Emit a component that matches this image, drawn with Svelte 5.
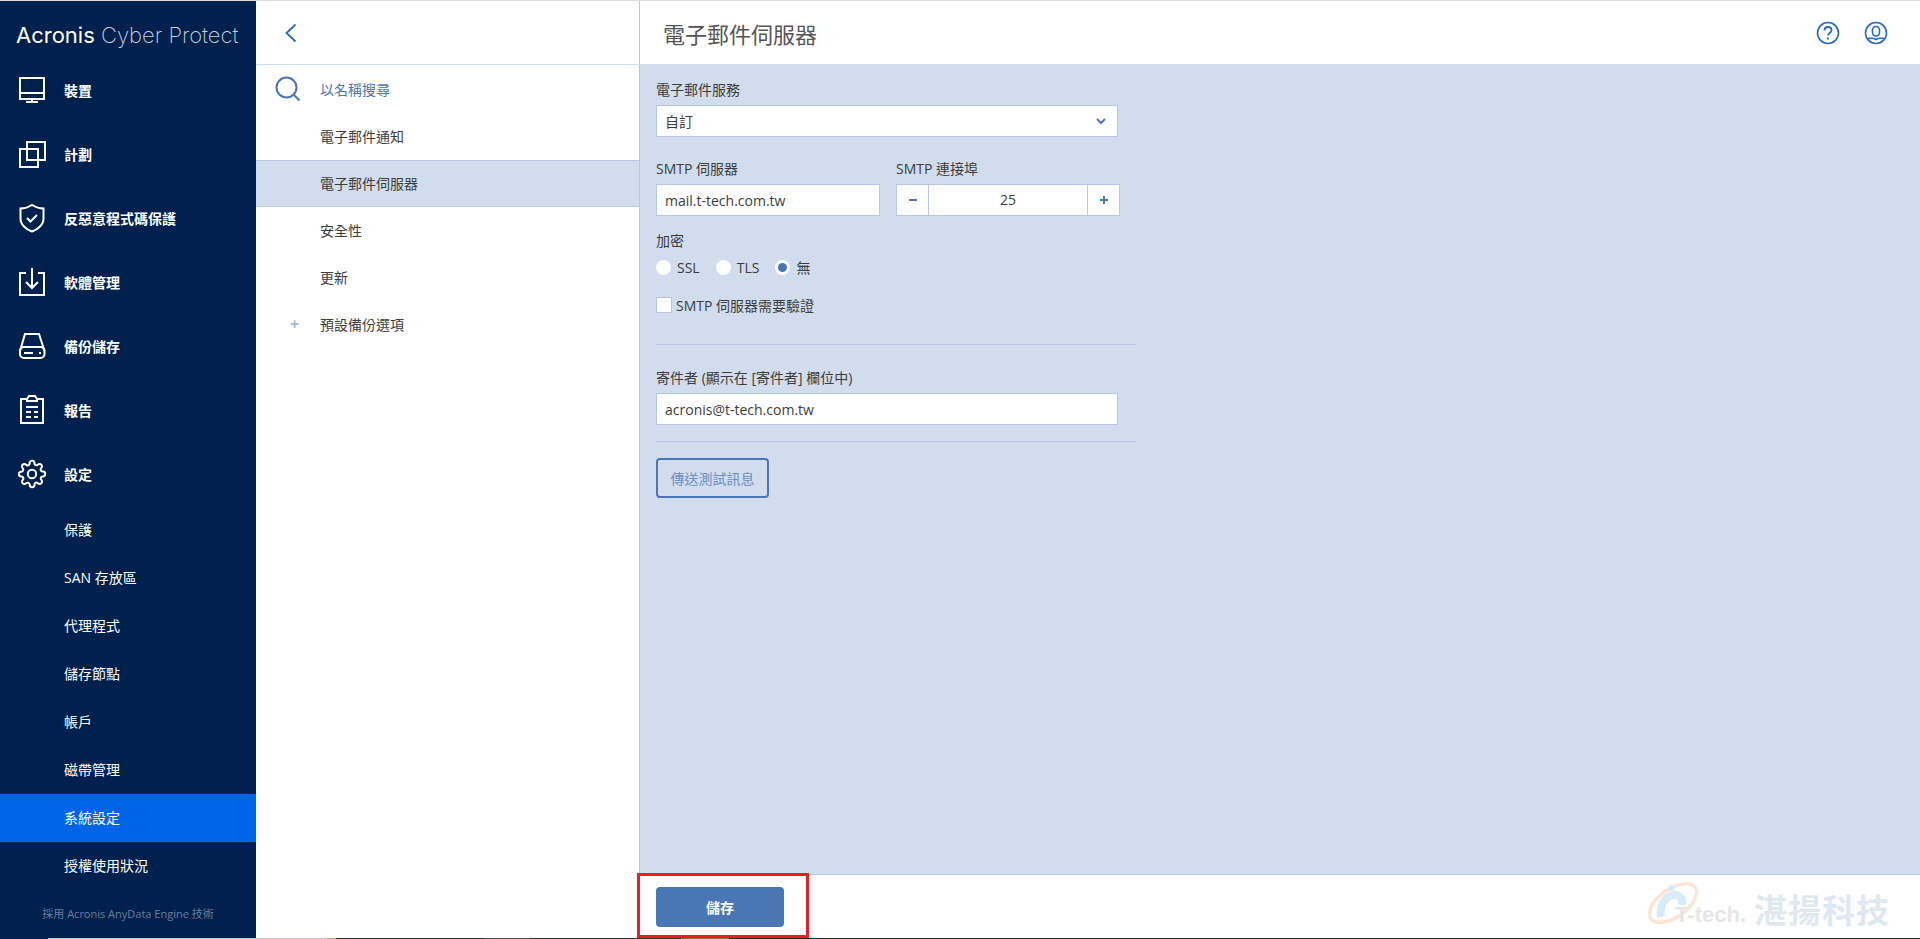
<script lang="ts">
	const mainNav = [
		{ id: 'devices', label: '裝置' },
		{ id: 'plans', label: '計劃' },
		{ id: 'shield', label: '反惡意程式碼保護' },
		{ id: 'software', label: '軟體管理' },
		{ id: 'storage', label: '備份儲存' },
		{ id: 'reports', label: '報告' },
		{ id: 'settings', label: '設定' }
	];

	const subNav = ['保護', 'SAN 存放區', '代理程式', '儲存節點', '帳戶', '磁帶管理', '系統設定', '授權使用狀況'];
	const activeSub = '系統設定';

	const settingsItems = [
		{ label: '電子郵件通知' },
		{ label: '電子郵件伺服器', active: true },
		{ label: '安全性' },
		{ label: '更新' },
		{ label: '預設備份選項', expandable: true }
	];

	const encryption = ['SSL', 'TLS', '無'];
	let selectedEncryption = $state('無');
	let port = $state(25);
</script>

<div class="shell">
	<aside class="sidebar">
		<div class="logo"><b>Acronis</b> <span>Cyber Protect</span></div>
		<nav>
			{#each mainNav as item (item.id)}
				<div class="navItem">
					<svg class="navIcon" width="32" height="32" viewBox="0 0 32 32" fill="none" stroke="#fff" stroke-width="2">
						{#if item.id === 'devices'}
							<rect x="4" y="4" width="24" height="21" />
							<path d="M4 19h24M16 25v3M10 28h12" />
						{:else if item.id === 'plans'}
							<rect x="4" y="11" width="18" height="18" />
							<rect x="11" y="4" width="18" height="18" />
						{:else if item.id === 'shield'}
							<path d="M16 3c4 2.500 8 3.500 11.500 3.500V17c0 6-6 10.500-11.500 12.500C10.500 27.500 4.500 23 4.500 17V6.500C8 6.500 12 5.500 16 3z" />
							<path d="M11 16l3.500 3.500 6.500-6.500" />
						{:else if item.id === 'software'}
							<path d="M10 7H4v22h24V7h-6M16 2v20M10 16l6 6 6-6" />
						{:else if item.id === 'storage'}
							<rect x="4" y="17" width="24.500" height="11" rx="4" />
							<path d="M4 21L9 4h14l5.500 17M8 23h9M23 23h2" />
						{:else if item.id === 'reports'}
							<path d="M11 5H5v24h22V5h-6" />
							<path d="M11 7V5l2-3h6l2 3v2zM10 13h12M10 18h5M18 18h4M10 23h5M18 23h4" />
						{:else}
							<g transform="translate(1.600 1.600) scale(1.200)" stroke-width="1.700">
								<circle cx="12" cy="12" r="3.500" />
								<path d="M19.400 15a1.650 1.650 0 0 0 .33 1.820l.06.06a2 2 0 0 1 0 2.830 2 2 0 0 1-2.830 0l-.06-.06a1.650 1.650 0 0 0-1.820-.33 1.650 1.650 0 0 0-1 1.510V21a2 2 0 0 1-2 2 2 2 0 0 1-2-2v-.09A1.650 1.650 0 0 0 9 19.400a1.650 1.650 0 0 0-1.820.33l-.06.06a2 2 0 0 1-2.830 0 2 2 0 0 1 0-2.830l.06-.06a1.650 1.650 0 0 0 .33-1.820 1.650 1.650 0 0 0-1.510-1H3a2 2 0 0 1-2-2 2 2 0 0 1 2-2h.09A1.650 1.650 0 0 0 4.600 9a1.650 1.650 0 0 0-.33-1.820l-.06-.06a2 2 0 0 1 0-2.830 2 2 0 0 1 2.830 0l.06.06a1.650 1.650 0 0 0 1.820.33H9a1.650 1.650 0 0 0 1-1.510V3a2 2 0 0 1 2-2 2 2 0 0 1 2 2v.09a1.650 1.650 0 0 0 1 1.510 1.650 1.650 0 0 0 1.820-.33l.06-.06a2 2 0 0 1 2.830 0 2 2 0 0 1 0 2.830l-.06.06a1.650 1.650 0 0 0-.33 1.820V9a1.650 1.650 0 0 0 1.510 1H21a2 2 0 0 1 2 2 2 2 0 0 1-2 2h-.09a1.650 1.650 0 0 0-1.510 1z" />
							</g>
						{/if}
					</svg>
					<span>{item.label}</span>
				</div>
			{/each}
			<div class="subNav">
				{#each subNav as label (label)}
					<div class="subItem" class:subActive={label === activeSub}>{label}</div>
				{/each}
			</div>
		</nav>
		<div class="poweredBy">採用 Acronis AnyData Engine 技術</div>
	</aside>

	<section class="settingsColumn">
		<div class="backBar">
			<svg width="12" height="20" viewBox="0 0 12 20" fill="none" stroke="#2668c5" stroke-width="1.800"><path d="M10.500 1.500L1.500 10l9 8.500" /></svg>
		</div>
		<div class="searchRow">
			<svg width="26" height="26" viewBox="0 0 26 26" fill="none" stroke="#4a76b5" stroke-width="2"><circle cx="11.500" cy="11.500" r="10" /><path d="M18.500 18.500l6 6" /></svg>
			<span>以名稱搜尋</span>
		</div>
		{#each settingsItems as item (item.label)}
			<div class="settingsRow" class:rowActive={item.active}>
				{#if item.expandable}<span class="plus">+</span>{/if}
				{item.label}
			</div>
		{/each}
	</section>

	<main class="detail">
		<header class="detailHeader">
			<h1>電子郵件伺服器</h1>
			<div class="headerIcons">
				<svg width="24" height="24" viewBox="0 0 24 24" fill="none" stroke="#2668c5" stroke-width="1.600">
					<circle cx="12" cy="12" r="10.500" />
					<path d="M8.500 9.500c0-2 1.500-3.500 3.500-3.500s3.500 1.400 3.500 3.300c0 2.700-3.500 2.700-3.500 5.200" stroke-width="1.800" />
					<path d="M12 16.500v2" stroke-width="1.800" />
				</svg>
				<svg width="24" height="24" viewBox="0 0 24 24" fill="none" stroke="#2668c5" stroke-width="1.600">
					<circle cx="12" cy="12" r="10.500" />
					<rect x="8.500" y="5.500" width="7" height="9.500" rx="3.500" />
					<path d="M3.500 17.500c3 0 5-1 8.500 1 3.500-2 5.500-1 8.500-1" />
				</svg>
			</div>
		</header>

		<div class="form">
			<label class="field">
				<span class="fieldLabel">電子郵件服務</span>
				<div class="select wide">
					<span>自訂</span>
					<svg width="10" height="7" viewBox="0 0 10 7" fill="none" stroke="#4a76b5" stroke-width="2"><path d="M1 1l4 4 4-4" /></svg>
				</div>
			</label>

			<div class="fieldPair">
				<label class="field">
					<span class="fieldLabel">SMTP 伺服器</span>
					<div class="input server">mail.t-tech.com.tw</div>
				</label>
				<div class="field">
					<span class="fieldLabel">SMTP 連接埠</span>
					<div class="stepper">
						<button onclick={() => port--}><span class="minus"></span></button>
						<div class="stepperValue">{port}</div>
						<button onclick={() => port++}><span class="plusSign"></span></button>
					</div>
				</div>
			</div>

			<div class="fieldLabel encryptionLabel">加密</div>
			<div class="radios">
				{#each encryption as option (option)}
					<button class="radio" onclick={() => (selectedEncryption = option)}>
						<span class="radioDot" class:radioOn={selectedEncryption === option}></span>
						{option}
					</button>
				{/each}
			</div>

			<div class="checkRow">
				<span class="checkbox"></span>
				SMTP 伺服器需要驗證
			</div>

			<hr class="firstRule" />

			<label class="field">
				<span class="fieldLabel">寄件者 (顯示在 [寄件者] 欄位中)</span>
				<div class="input wide">acronis@t-tech.com.tw</div>
			</label>

			<hr class="secondRule" />

			<button class="testButton">傳送測試訊息</button>
		</div>

		<footer class="detailFooter">
			<button class="saveButton">儲存</button>
			<div class="redBox"></div>
			<div class="watermark">
				<svg width="56" height="48" viewBox="0 0 56 48" fill="none">
					<ellipse cx="28" cy="24" rx="27" ry="14" transform="rotate(-35 28 24)" stroke="#fbe6d6" stroke-width="3.500" />
					<path d="M16 38c-2-12 5-22 14-22 6 0 8 5 7 10" stroke="#d8ecf7" stroke-width="8" />
					<circle cx="27" cy="9" r="3.500" fill="#d8ecf7" />
				</svg>
				<span class="wmTech">T-tech.</span>
				<span class="wmName">湛揚科技</span>
			</div>
		</footer>
	</main>
</div>
<div class="screenEdge"></div>

<style>
	:global(body) {
		margin: 0;
		background: #fff;
		overflow: hidden;
	}

	.shell {
		display: grid;
		grid-template-columns: 256px 384px 1fr;
		grid-template-rows: 937px;
		height: 937px;
		border-top: 1px solid #dcdcdc;
		font-family: 'Open Sans', 'Noto Sans CJK TC', sans-serif;
		font-size: 14px;
		color: #3c3c3c;
	}

	/* one row of a taskbar peeks out at the bottom of the capture */
	.screenEdge {
		height: 1px;
		background: linear-gradient(
			90deg,
			#00204d 0 48px,
			#b9c4d6 48px 256px,
			#c8c8c0 256px 327px,
			#b5ad6a 327px 336px,
			#2a3034 336px 485px,
			#555 485px 530px,
			#2a3034 530px 681px,
			#b0622a 681px 729px,
			#20282e 729px
		);
	}

	.sidebar {
		background: #00204d;
		color: #fff;
		display: flex;
		flex-direction: column;
	}

	.logo {
		height: 57px;
		padding: 18px 0 0 16px;
		box-sizing: border-box;
		font-family: Inter, 'Liberation Sans', sans-serif;
		font-size: 22px;
		line-height: 32px;
		white-space: nowrap;
	}

	.logo b {
		font-weight: 400;
	}

	.logo span {
		font-weight: 200;
		color: #c9d0da;
	}

	.navItem {
		height: 64px;
		display: flex;
		align-items: center;
		padding-left: 16px;
		font-weight: 700;
		gap: 16px;
	}

	.subItem {
		height: 48px;
		line-height: 48px;
		padding-left: 64px;
	}

	.subActive {
		background: #0064e6;
	}

	.poweredBy {
		margin-top: auto;
		height: 48px;
		line-height: 48px;
		text-align: center;
		font-size: 11px;
		color: #6b7f9c;
	}

	.settingsColumn {
		background: #fff;
		border-right: 1px solid #b7c9e2;
		display: flex;
		flex-direction: column;
	}

	.backBar {
		height: 63px;
		border-bottom: 1px solid #d1dcec;
		display: flex;
		align-items: center;
		padding-left: 29px;
		margin-right: -1px;
		flex: none;
	}

	.searchRow {
		height: 47px;
		padding: 0 0 1px 19px;
		display: flex;
		align-items: center;
		gap: 19px;
		color: #4a76b5;
		flex: none;
	}

	.settingsRow {
		height: 47px;
		line-height: 47px;
		padding-left: 64px;
		position: relative;
		flex: none;
	}

	.rowActive {
		background: #d1dcec;
		box-shadow: inset 0 1px 0 #b7c9e2, inset 0 -1px 0 #b7c9e2;
	}

	.plus {
		position: absolute;
		left: 34px;
		font-size: 16px;
		font-weight: 700;
		color: #a3b9d9;
	}

	.detail {
		background: #d1dcec;
		display: flex;
		flex-direction: column;
		min-width: 0;
	}

	.detailHeader {
		height: 63px;
		flex: none;
		background: #fff;
		display: flex;
		align-items: center;
		justify-content: space-between;
		padding: 0 32px 0 23px;
	}

	.detailHeader h1 {
		margin: 0;
		font-size: 22px;
		font-weight: 400;
		color: #555;
	}

	.headerIcons {
		display: flex;
		gap: 24px;
	}

	.form {
		flex: 1;
		padding: 15px 0 0 16px;
		width: 480px;
	}

	.field {
		display: block;
	}

	.fieldLabel {
		display: block;
		height: 21px;
		line-height: 21px;
		color: #3c3c3c;
	}

	.select,
	.input {
		height: 32px;
		box-sizing: border-box;
		background: #fff;
		border: 1px solid #b7c9e2;
		display: flex;
		align-items: center;
		justify-content: space-between;
		padding: 0 8px;
		margin-top: 5px;
	}

	.select {
		padding-right: 11px;
	}

	.wide {
		width: 462px;
	}

	.server {
		width: 224px;
	}

	.fieldPair {
		display: flex;
		gap: 16px;
		margin-top: 21px;
	}

	.stepper {
		display: flex;
		width: 224px;
		height: 32px;
		box-sizing: border-box;
		margin-top: 5px;
		background: #fff;
		border: 1px solid #b7c9e2;
	}

	.stepper button {
		width: 31px;
		border: 0;
		padding: 0;
		background: none;
		display: flex;
		align-items: center;
		justify-content: center;
	}

	.minus,
	.plusSign {
		display: block;
		width: 8px;
		height: 2px;
		background: #4a76b5;
		position: relative;
	}

	.plusSign::after {
		content: '';
		position: absolute;
		left: 3px;
		top: -3px;
		width: 2px;
		height: 8px;
		background: #4a76b5;
	}

	.stepperValue {
		flex: 1;
		line-height: 30px;
		text-align: center;
		border-left: 1px solid #b7c9e2;
		border-right: 1px solid #b7c9e2;
	}

	.encryptionLabel {
		margin-top: 14px;
	}

	.radios {
		display: flex;
		gap: 16px;
		margin-top: 5px;
	}

	.radio {
		display: flex;
		align-items: center;
		gap: 6px;
		height: 22px;
		padding: 0;
		border: 0;
		background: none;
		font: inherit;
		color: #3c3c3c;
	}

	.radioDot {
		width: 15px;
		height: 15px;
		border-radius: 50%;
		background: #fff;
		display: flex;
		align-items: center;
		justify-content: center;
	}

	.radioOn::after {
		content: '';
		width: 9px;
		height: 9px;
		border-radius: 50%;
		background: #4a76b5;
	}

	.checkRow {
		display: flex;
		align-items: center;
		gap: 4px;
		margin-top: 16px;
		height: 22px;
	}

	.checkbox {
		width: 16px;
		height: 16px;
		box-sizing: border-box;
		background: #fff;
		border: 1px solid #b7c9e2;
	}

	hr {
		border: 0;
		height: 1px;
		background: #b7c9e2;
		margin: 0;
	}

	.firstRule {
		margin: 28px 0 22px;
	}

	.secondRule {
		margin: 16px 0 16px;
	}

	.testButton {
		width: 113px;
		height: 40px;
		border: 2px solid #4a76b5;
		border-radius: 4px;
		background: none;
		font: inherit;
		color: #6a8fc4;
		padding: 0;
	}

	.detailFooter {
		height: 64px;
		flex: none;
		background: #fff;
		border-top: 1px solid #b7c9e2;
		padding: 12px 0 0 16px;
		box-sizing: border-box;
		position: relative;
	}

	.saveButton {
		width: 128px;
		height: 40px;
		border: 0;
		border-radius: 4px;
		background: #4a76b5;
		color: #fff;
		font: inherit;
		font-weight: 700;
	}

	.redBox {
		position: absolute;
		left: -3px;
		top: -2px;
		width: 172px;
		height: 65px;
		box-sizing: border-box;
		border: 3px solid #ee1c25;
	}

	.watermark {
		position: absolute;
		right: 30px;
		top: 2px;
		height: 56px;
		display: flex;
		align-items: flex-end;
		white-space: nowrap;
	}

	.watermark svg {
		position: absolute;
		left: 0;
		top: 2px;
	}

	.wmTech {
		font-family: 'Liberation Sans', sans-serif;
		font-size: 22px;
		font-weight: 700;
		color: #e6e6e6;
		margin: 0 8px 5px 30px;
		position: relative;
	}

	.wmName {
		font-size: 33px;
		font-weight: 700;
		line-height: 44px;
		color: #dfe8f1;
		letter-spacing: 1px;
	}
</style>
